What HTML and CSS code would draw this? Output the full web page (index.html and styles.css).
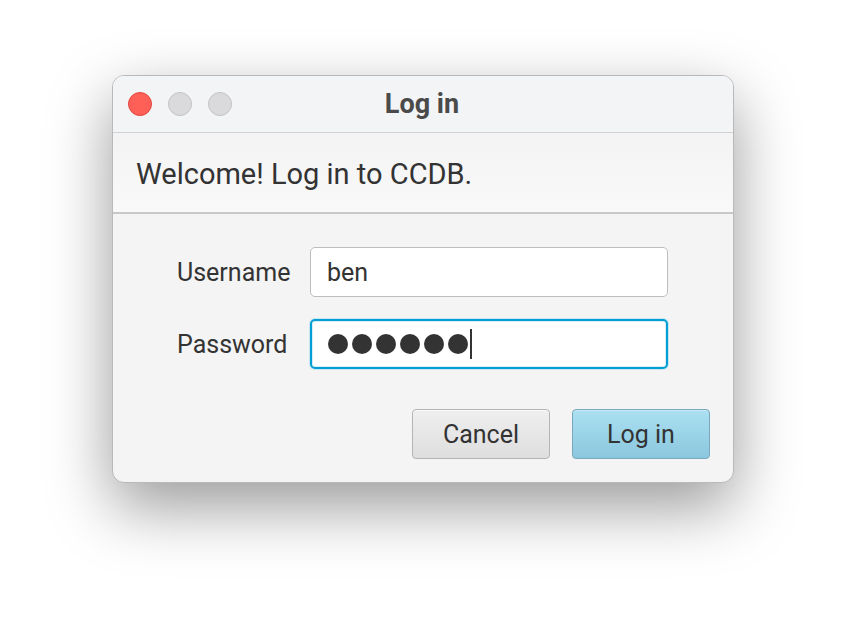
FILE: index.html
```html
<!DOCTYPE html>
<html lang="en">
<head>
    <meta charset="UTF-8">
    <title>Log in</title>
    <link rel="stylesheet" href="styles.css">
</head>
<body>
    <div class="window">
        <!-- Title bar -->
        <div class="titlebar">
            <div class="lights">
                <span class="light close"></span>
                <span class="light"></span>
                <span class="light"></span>
            </div>
            <div class="title">Log in</div>
            <div></div>
        </div>

        <div class="header">Welcome! Log in to CCDB.</div>

        <div class="content">
            <div class="form">
                <label class="label">Username</label>
                <div class="field">ben</div>

                <label class="label">Password</label>
                <div class="field focused">
                    <span class="dot"></span><span class="dot"></span><span class="dot"></span><span class="dot"></span><span class="dot"></span><span class="dot"></span><span class="caret"></span>
                </div>
            </div>

            <div class="buttons">
                <button class="btn">Cancel</button>
                <button class="btn default">Log in</button>
            </div>
        </div>
    </div>
</body>
</html>
```

FILE: styles.css
```css
html {
    height: 100%;
}

body {
    margin: 0;
    min-height: 100%;
    box-sizing: border-box;
    background-color: white;
    font-family: Roboto, "Noto Sans", sans-serif;
    color: #333;
    padding: 75px 0 0 112px;
}

.window {
    width: 622px;
    height: 408px;
    box-sizing: border-box;
    border: 1px solid #b9b9b9;
    border-radius: 12px;
    background-color: #f4f4f4;
    box-shadow: 0 24px 64px rgba(0, 0, 0, 0.4);
    overflow: hidden;
    display: flex;
    flex-direction: column;
}

.titlebar {
    height: 56px;
    background-color: #f3f4f6;
    border-bottom: 1px solid #d2d2d4;
    display: grid;
    grid-template-columns: 1fr auto 1fr;
    align-items: center;
}

.lights {
    display: flex;
    gap: 16px;
    padding-left: 15px;
}

.light {
    width: 22px;
    height: 22px;
    border-radius: 50%;
    background-color: #dadadc;
    border: 1px solid #c3c3c5;
}

.light.close {
    background-color: #fe5f57;
    border-color: #e2463f;
}

.title {
    font-weight: bold;
    font-size: 27px;
    color: #4a4a4a;
    padding-right: 2px;
}

.header {
    height: 81px;
    box-sizing: border-box;
    padding: 2px 23px 0;
    display: flex;
    align-items: center;
    font-size: 29px;
    color: #333;
    background: linear-gradient(#f3f3f3, #f9f9f9);
    border-bottom: 2px solid #c8c8c8;
}

.content {
    padding: 33px 23px 0 64px;
}

.form {
    display: grid;
    grid-template-columns: 133px 358px;
    row-gap: 22px;
    align-items: center;
}

.label {
    font-size: 25px;
    color: #333;
}

.field {
    height: 50px;
    box-sizing: border-box;
    border: 1px solid #bdbdbd;
    border-radius: 5px;
    background-color: white;
    padding: 0 16px;
    display: flex;
    align-items: center;
    font-size: 25px;
    color: #333;
}

.field.focused {
    border: 2px solid #039ed3;
    box-shadow: 0 0 0 1px #c6e8f4, inset 0 0 0 1px #d6eef6;
    padding-left: 16px;
}

.dot {
    width: 20px;
    height: 20px;
    border-radius: 50%;
    background-color: #333;
    margin-right: 4px;
}

.caret {
    width: 2px;
    height: 30px;
    background-color: #333;
    margin-left: -2px;
}

.buttons {
    display: flex;
    justify-content: flex-end;
    gap: 22px;
    margin-top: 40px;
}

.btn {
    width: 138px;
    height: 50px;
    font-family: Roboto, "Noto Sans", sans-serif;
    font-size: 25px;
    color: #333;
    border: 1px solid #b4b4b4;
    border-radius: 4px;
    background: linear-gradient(#efefef, #dedede);
    box-shadow: inset 0 1px 0 #fafafa;
    cursor: pointer;
}

.btn.default {
    border-color: #79a8bc;
    background: linear-gradient(#ace0f2, #8ac7de);
    box-shadow: inset 0 1px 0 #c4ebf7;
}
```
